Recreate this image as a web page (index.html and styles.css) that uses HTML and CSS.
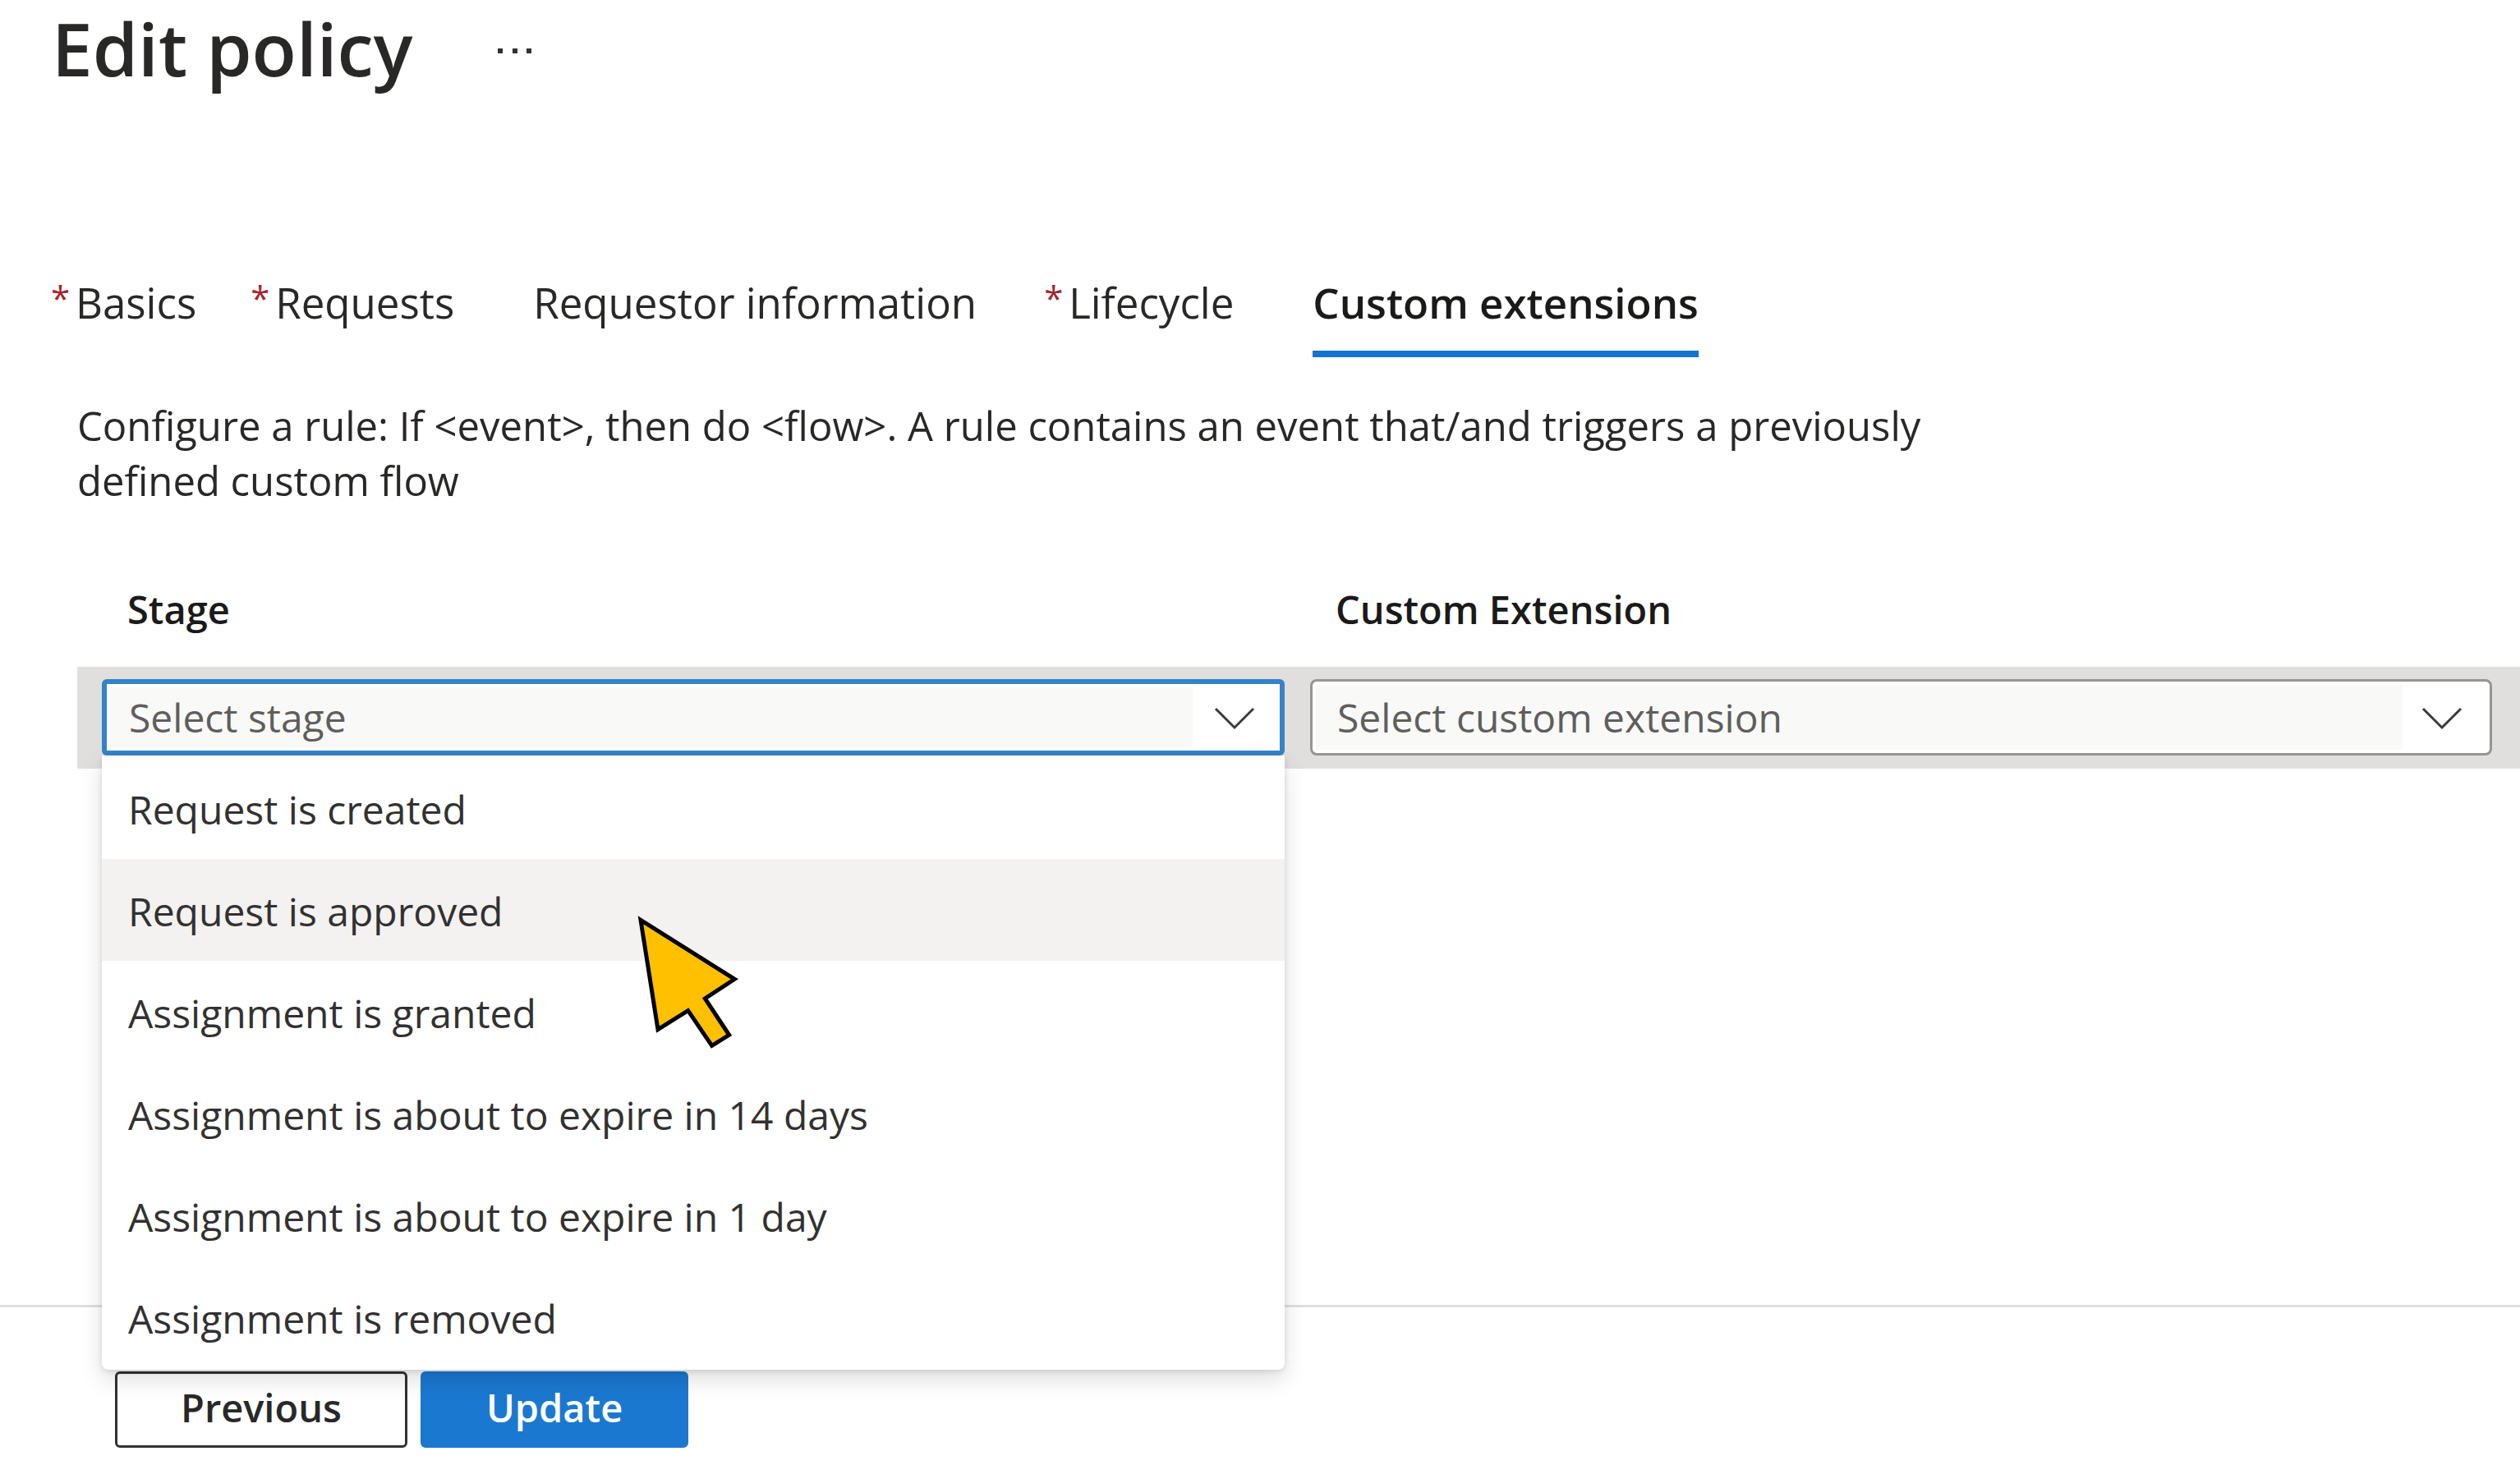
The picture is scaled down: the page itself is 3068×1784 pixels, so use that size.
FILE: index.html
```
<!DOCTYPE html>
<html lang="en">
<head>
<meta charset="utf-8">
<title>Edit policy</title>
<link rel="stylesheet" href="styles.css">
</head>
<body>
<header class="page-header">
  <h1 class="page-title">Edit policy</h1>
  <button class="more" type="button" aria-label="More actions">
    <svg width="42" height="8" viewBox="0 0 42 8" fill="#323130"><rect x="0" y="1" width="6" height="6"/><rect x="18" y="1" width="6" height="6"/><rect x="35" y="1" width="6" height="6"/></svg>
  </button>
</header>
<nav class="tabs">
  <a class="tab required" href="#basics">Basics</a>
  <a class="tab required" href="#requests">Requests</a>
  <a class="tab" href="#requestor">Requestor information</a>
  <a class="tab required spaced" href="#lifecycle">Lifecycle</a>
  <a class="tab active" href="#extensions" aria-current="page">Custom extensions</a>
</nav>
<main class="content">
  <p class="intro">Configure a rule: If &lt;event&gt;, then do &lt;flow&gt;. A rule contains an event that/and triggers a previously defined custom flow</p>
  <table class="rules">
    <thead>
      <tr><th scope="col" id="stage-head">Stage</th><th scope="col" id="extension-head">Custom Extension</th></tr>
    </thead>
    <tbody>
      <tr>
        <td>
          <div class="combo open">
            <select class="field" aria-labelledby="stage-head"><option>Select stage</option></select>
            <svg class="chevron" viewBox="0 0 50 28"><path d="M2 2 25 25 48 2"/></svg>
            <ul class="menu">
              <li>Request is created</li>
              <li class="hovered">Request is approved
                <svg class="pointer" viewBox="225 160 381 501"><path d="M240 182 583 398 475 469 563 602 500 641 413 513 303 582Z" fill="#ffc000" stroke="#000" stroke-width="15" stroke-miterlimit="10"/></svg>
              </li>
              <li>Assignment is granted</li>
              <li>Assignment is about to expire in 14 days</li>
              <li>Assignment is about to expire in 1 day</li>
              <li>Assignment is removed</li>
            </ul>
          </div>
        </td>
        <td>
          <div class="combo">
            <select class="field" aria-labelledby="extension-head"><option>Select custom extension</option></select>
            <svg class="chevron" viewBox="0 0 50 28"><path d="M2 2 25 25 48 2"/></svg>
          </div>
        </td>
      </tr>
    </tbody>
  </table>
</main>
<footer class="actions">
  <button class="button" type="button">Previous</button>
  <button class="button primary" type="button">Update</button>
</footer>
</body>
</html>
```
FILE: styles.css
```
* {
  box-sizing: border-box;
}

body {
  margin: 0;
  min-height: 100vh;
  display: flex;
  flex-direction: column;
  background: #fff;
  color: #292827;
  font-family: "Open Sans", "Noto Sans", sans-serif;
  font-size: 48px;
}

.page-header {
  display: flex;
  align-items: center;
  gap: 104px;
  padding-left: 63px;
}

.page-title {
  margin: 0;
  font-size: 89px;
  font-weight: 600;
  line-height: 118px;
}

.more {
  display: flex;
  padding: 6px 0 0;
  border: 0;
  background: none;
}

.tabs {
  display: flex;
  gap: 96px;
  margin-top: 215px;
  padding-left: 92px;
  font-size: 51px;
  line-height: 70px;
}

.tab {
  position: relative;
  padding-bottom: 24px;
  border-bottom: 8px solid transparent;
  color: inherit;
  text-decoration: none;
  white-space: nowrap;
}

.tab.spaced {
  margin-left: 16px;
}

.tab.required::before {
  content: "*";
  position: absolute;
  left: -30px;
  top: 0;
  color: #a4262c;
  font-size: 42px;
  line-height: 60px;
}

.tab.active {
  border-color: #1374d0;
  color: #1b1a19;
  font-weight: 600;
}

.content {
  flex: 1;
  padding-left: 94px;
}

.intro {
  max-width: 2300px;
  margin: 50px 0 89px;
  font-size: 49px;
  line-height: 67px;
}

.rules {
  width: 100%;
  table-layout: fixed;
  border-collapse: collapse;
}

.rules th {
  padding: 0 0 36px 61px;
  color: #1b1a19;
  font-size: 47px;
  font-weight: 600;
  line-height: 68px;
  text-align: left;
}

.rules th + th {
  padding-left: 45px;
}

.rules td {
  padding: 15px 17px 16px 30px;
  background: #e1dfdd;
}

.rules td + td {
  padding-right: 34px;
  padding-left: 14px;
}

.combo {
  position: relative;
}

.field {
  display: block;
  width: 100%;
  height: 93px;
  padding: 0 110px 0 30px;
  border: 3px solid #979593;
  border-radius: 8px;
  appearance: none;
  background: linear-gradient(#f9f9f8, #f9f9f8) 4px 4px / calc(100% - 110px) calc(100% - 8px) no-repeat #fff;
  color: #605e5c;
  font: inherit;
}

.open .field {
  padding: 0 107px 0 27px;
  border: 6px solid #3683c9;
  border-radius: 6px;
}

.chevron {
  position: absolute;
  top: 34px;
  right: 36px;
  width: 50px;
  height: 28px;
  fill: none;
  stroke: #3b3a39;
  stroke-width: 3;
  pointer-events: none;
}

.menu {
  position: absolute;
  top: 100%;
  left: 0;
  right: 0;
  margin: 0;
  padding: 2px 0;
  border-radius: 0 0 8px 8px;
  background: #fff;
  box-shadow: 0 12px 28px rgba(0, 0, 0, 0.13), 0 2px 7px rgba(0, 0, 0, 0.11);
  color: #323130;
  line-height: 128px;
  list-style: none;
}

.menu li {
  position: relative;
  height: 124px;
  padding-left: 32px;
}

.menu .hovered {
  background: #f3f2f1;
  z-index: 1;
}

.pointer {
  position: absolute;
  left: 651px;
  top: 67px;
  width: 127px;
  height: 167px;
}

.actions {
  display: flex;
  gap: 16px;
  padding: 78px 140px 21px;
  border-top: 3px solid #e1dfdd;
}

.button {
  height: 93px;
  padding: 0 77px 6px;
  border: 3px solid #323130;
  border-radius: 6px;
  background: #fff;
  color: #292827;
  font: inherit;
  font-size: 47px;
  font-weight: 600;
}

.button.primary {
  border-color: #1b78d0;
  background: #1b78d0;
  color: #fff;
}
```
